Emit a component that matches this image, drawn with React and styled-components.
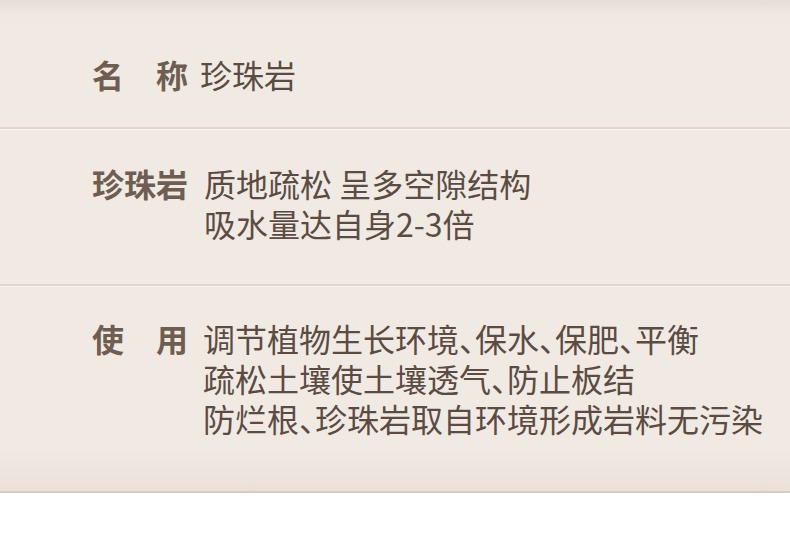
import React from 'react';
import styled, { createGlobalStyle } from 'styled-components';

const GlobalStyle = createGlobalStyle`
  body {
    margin: 0;
    background: #ffffff;
    font-family: "Noto Sans CJK SC", "Noto Sans", sans-serif;
  }
`;

const rows = [
  { label: '名　称', lines: ['珍珠岩'], gap: 12, top: 54, bottom: 33 },
  { label: '珍珠岩', lines: ['质地疏松 呈多空隙结构', '吸水量达自身2-3倍'], gap: 16, top: 33, bottom: 41 },
  {
    label: '使　用',
    lines: [
      '调节植物生长环境、保水、保肥、平衡',
      '疏松土壤使土壤透气、防止板结',
      '防烂根、珍珠岩取自环境形成岩料无污染',
    ],
    gap: 15,
    top: 31,
    bottom: 53,
  },
];

const App = () => (
  <>
    <GlobalStyle />
    <Panel>
      {rows.map((row, i) => (
        <Row key={i} $top={row.top} $bottom={row.bottom} $first={i === 0} $last={i === rows.length - 1}>
          <Label>{row.label}</Label>
          <Value $gap={row.gap}>
            {row.lines.map((line) => (
              <Line key={line}>{line}</Line>
            ))}
          </Value>
        </Row>
      ))}
    </Panel>
  </>
);

const Panel = styled.div`
  width: 790px;
  display: flex;
  flex-direction: column;
  background: #f1eae3;
  border-bottom: 2px solid #d9cdc3;
`;

const Row = styled.div`
  display: flex;
  align-items: flex-start;
  padding: ${(p) => p.$top}px 0 ${(p) => p.$bottom}px 92px;
  border-top: ${(p) => (p.$first ? 'none' : '1px solid #faf6f2')};
  border-bottom: ${(p) => (p.$last ? 'none' : '2px solid #e2d6cc')};
  background: ${(p) =>
    p.$first
      ? 'linear-gradient(to bottom, #e6ddd5 0px, #efe8e1 14px, #f1eae3 30px)'
      : p.$last
      ? 'linear-gradient(to bottom, #f1eae3 0, #f1eae3 160px, #e9e1da 100%)'
      : '#f1eae3'};
`;

const Label = styled.div`
  flex: none;
  width: 96px;
  font-size: 32px;
  line-height: 40px;
  font-weight: 700;
  color: #6d5e51;
  white-space: pre;
`;

const Value = styled.div`
  display: flex;
  flex-direction: column;
  margin-left: ${(p) => p.$gap}px;
  font-size: 32px;
  line-height: 40px;
  font-weight: 400;
  color: #5a4c43;
  font-feature-settings: "halt";
`;

const Line = styled.div`
  white-space: pre;
`;

export default App;
